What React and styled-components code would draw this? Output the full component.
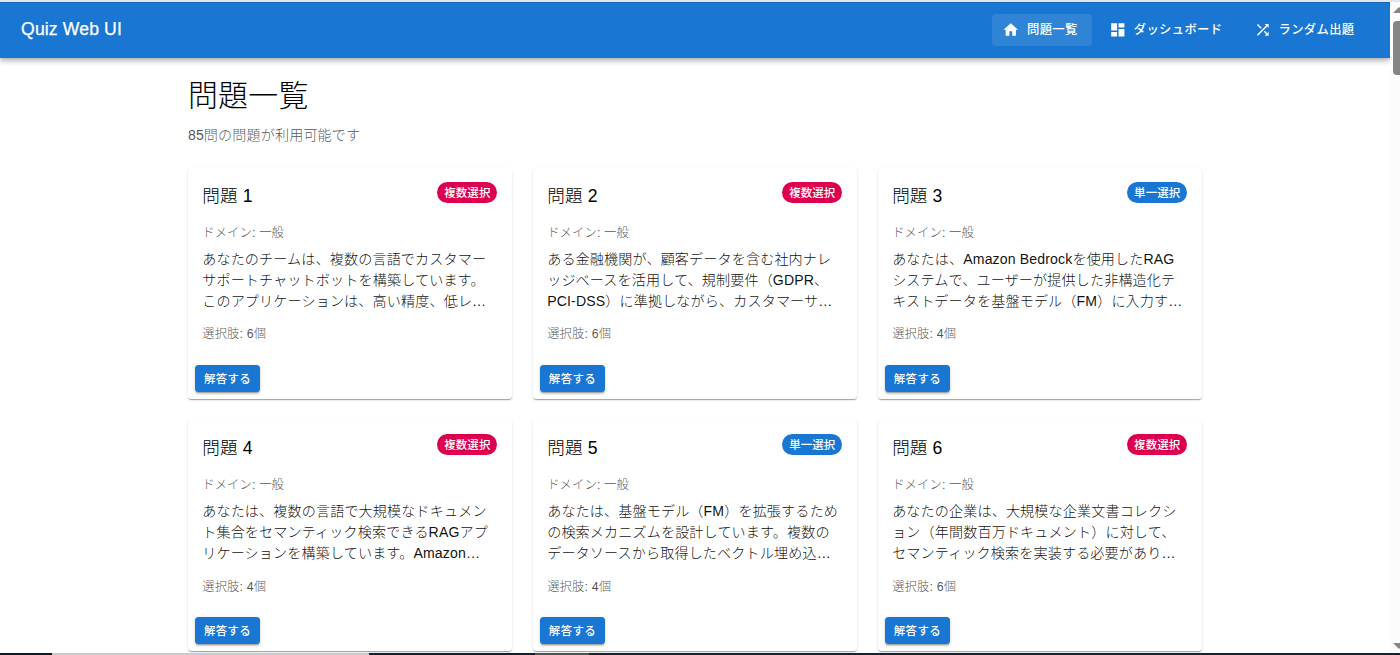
import React from "react";
import styled, { createGlobalStyle } from "styled-components";

const Global = createGlobalStyle`
  * { box-sizing: border-box; }
  html, body { margin: 0; height: 100%; overflow: hidden; background: #fff; }
  body {
    font-family: "Liberation Sans", "Noto Sans CJK JP", sans-serif;
    font-size: 14.08px;
    color: rgba(0, 0, 0, 0.87);
  }
`;

const Window = styled.div`
  height: 655px;
  display: flex;
  flex-direction: column;
  overflow: hidden;
`;

const TopEdge = styled.div`
  height: 2px;
  flex: none;
  background: #dfe7f1;
`;

const Viewport = styled.div`
  flex: 1;
  min-height: 0;
  display: flex;
`;

const Page = styled.div`
  flex: 1;
  min-width: 0;
  overflow: hidden;
`;

const AppBar = styled.header`
  height: 56px;
  padding: 0 21.1px 2px;
  display: flex;
  align-items: center;
  justify-content: space-between;
  background: #1976d2;
  color: #fff;
  border-top: 1px solid #1564b5;
  box-shadow: 0 1.8px 3.5px -1px rgba(0, 0, 0, 0.2),
    0 3.5px 4.4px rgba(0, 0, 0, 0.14), 0 1px 8.8px rgba(0, 0, 0, 0.12);
`;

const Brand = styled.div`
  font-size: 17.6px;
  line-height: 28px;
  padding-bottom: 1px;
  letter-spacing: 0.13px;
  -webkit-text-stroke: 0.25px currentColor;
`;

const Nav = styled.nav`
  display: flex;
  gap: 7px;
`;

const NavButton = styled.button`
  height: 32px;
  padding: 0 14px 0 10.5px;
  border: 0;
  border-radius: 3.5px;
  display: flex;
  align-items: center;
  gap: 7px;
  color: #fff;
  background: ${(p) => (p.$active ? "rgba(255, 255, 255, 0.1)" : "transparent")};
  font: 500 12.32px "Liberation Sans", "Noto Sans CJK JP", sans-serif;
  letter-spacing: 0.352px;
  white-space: nowrap;

  svg {
    width: 17.6px;
    height: 17.6px;
    fill: currentColor;
  }
`;

const NavLabel = styled.span`
  padding-bottom: 1px;
`;

const Container = styled.main`
  width: 1013.8px;
  margin: 0 auto;
  padding-top: 18.5px;
`;

const Heading = styled.h1`
  margin: 0 0 11.4px;
  font-size: 29.92px;
  font-weight: 300;
  line-height: 37px;
  letter-spacing: 0.3px;
  color: #000;
`;

const Subtitle = styled.p`
  margin: 0 0 21.6px;
  font-weight: 300;
  line-height: 21.12px;
  letter-spacing: 0.142px;
  color: rgba(0, 0, 0, 0.7);
`;

const Grid = styled.div`
  display: grid;
  grid-template-columns: repeat(3, 1fr);
  gap: 21.1px;
`;

const Card = styled.article`
  height: 231px;
  display: flex;
  flex-direction: column;
  border-radius: 3.5px;
  background: #fff;
  box-shadow: 0 1.8px 1px -1px rgba(0, 0, 0, 0.2),
    0 1px 1px rgba(0, 0, 0, 0.14), 0 1px 2.6px rgba(0, 0, 0, 0.12);
`;

const CardContent = styled.div`
  flex: 1;
  padding: 14.08px 14.3px;
`;

const CardHeader = styled.div`
  display: flex;
  justify-content: space-between;
  align-items: flex-start;
  margin-bottom: 14.9px;
`;

const CardTitle = styled.h2`
  margin: 0;
  font-size: 17.6px;
  font-weight: 300;
  line-height: 28.16px;
  letter-spacing: 0.132px;
  color: #000;
`;

const Chip = styled.span`
  height: 21.1px;
  padding: 0 7px 1px;
  border-radius: 11px;
  display: flex;
  align-items: center;
  color: #fff;
  background: ${(p) => (p.$multiple ? "#dc004e" : "#1976d2")};
  font-size: 11.44px;
  font-weight: 500;
  letter-spacing: 0.13px;
`;

const Meta = styled.p`
  margin: 0;
  font-size: 12.32px;
  font-weight: 300;
  line-height: 17.6px;
  letter-spacing: 0.142px;
  color: rgba(0, 0, 0, 0.7);
`;

const Question = styled.p`
  margin: 6.2px 0 14.6px;
  font-weight: 300;
  line-height: 21.12px;
  letter-spacing: 0.142px;
  color: rgba(0, 0, 0, 0.95);
`;

const Line = styled.span`
  display: block;
  white-space: nowrap;
`;

const CardActions = styled.div`
  padding: 7px 7.5px;
`;

const AnswerButton = styled.button`
  height: 27px;
  padding: 0 8.5px 2px;
  border: 0;
  border-radius: 3.5px;
  display: block;
  color: #fff;
  background: #1976d2;
  font: 500 11.44px "Liberation Sans", "Noto Sans CJK JP", sans-serif;
  letter-spacing: 0.352px;
  box-shadow: 0 2.6px 1px -1.8px rgba(0, 0, 0, 0.2),
    0 1.8px 1.8px rgba(0, 0, 0, 0.14), 0 1px 4.4px rgba(0, 0, 0, 0.12);
`;

const ScrollTrack = styled.div`
  width: 10.4px;
  flex: none;
  overflow: hidden;
  padding: 5px 0 4px 3px;
  display: flex;
  flex-direction: column;
  background: #fcfcfd;
`;

const ScrollThumb = styled.div`
  width: 12px;
  height: 54px;
  margin: 8px 0 auto;
  border-radius: 4px;
  background: #858585;
`;

const Arrow = styled.svg`
  width: 12px;
  height: 6px;
  flex: none;
  fill: #858585;
`;

const BottomEdge = styled.div`
  height: 2px;
  flex: none;
  display: flex;
  background: #14232f;
`;

const Segment = styled.div`
  width: ${(p) => p.$width}px;
  background: ${(p) => p.$color};
`;

const icons = {
  home: "M10 20v-6h4v6h5v-8h3L12 3 2 12h3v8z",
  dashboard: "M3 13h8V3H3zm0 8h8v-6H3zm10 0h8V11h-8zm0-18v6h8V3z",
  shuffle:
    "M10.59 9.17 5.41 4 4 5.41l5.17 5.17zM14.5 4l2.04 2.04L4 18.59 5.41 20 17.96 7.46 20 9.5V4zm.33 9.41-1.41 1.41 3.13 3.13L14.5 20H20v-5.5l-2.04 2.04z",
};

const navItems = [
  { label: "問題一覧", icon: "home", active: true },
  { label: "ダッシュボード", icon: "dashboard" },
  { label: "ランダム出題", icon: "shuffle" },
];

const questions = [
  {
    multiple: true,
    choices: 6,
    lines: [
      "あなたのチームは、複数の言語でカスタマー",
      "サポートチャットボットを構築しています。",
      "このアプリケーションは、高い精度、低レ…",
    ],
  },
  {
    multiple: true,
    choices: 6,
    lines: [
      "ある金融機関が、顧客データを含む社内ナレ",
      "ッジベースを活用して、規制要件（GDPR、",
      "PCI-DSS）に準拠しながら、カスタマーサ…",
    ],
  },
  {
    multiple: false,
    choices: 4,
    lines: [
      "あなたは、Amazon Bedrockを使用したRAG",
      "システムで、ユーザーが提供した非構造化テ",
      "キストデータを基盤モデル（FM）に入力す…",
    ],
  },
  {
    multiple: true,
    choices: 4,
    lines: [
      "あなたは、複数の言語で大規模なドキュメン",
      "ト集合をセマンティック検索できるRAGアプ",
      "リケーションを構築しています。Amazon…",
    ],
  },
  {
    multiple: false,
    choices: 4,
    lines: [
      "あなたは、基盤モデル（FM）を拡張するため",
      "の検索メカニズムを設計しています。複数の",
      "データソースから取得したベクトル埋め込…",
    ],
  },
  {
    multiple: true,
    choices: 6,
    lines: [
      "あなたの企業は、大規模な企業文書コレクシ",
      "ョン（年間数百万ドキュメント）に対して、",
      "セマンティック検索を実装する必要があり…",
    ],
  },
];

function QuestionCard({ number, multiple, choices, lines }) {
  return (
    <Card>
      <CardContent>
        <CardHeader>
          <CardTitle>問題 {number}</CardTitle>
          <Chip $multiple={multiple}>{multiple ? "複数選択" : "単一選択"}</Chip>
        </CardHeader>
        <Meta>ドメイン: 一般</Meta>
        <Question>
          {lines.map((line) => (
            <Line key={line}>{line}</Line>
          ))}
        </Question>
        <Meta>選択肢: {choices}個</Meta>
      </CardContent>
      <CardActions>
        <AnswerButton>解答する</AnswerButton>
      </CardActions>
    </Card>
  );
}

export default function App() {
  return (
    <Window lang="ja">
      <Global />
      <TopEdge />
      <Viewport>
        <Page>
          <AppBar>
            <Brand>Quiz Web UI</Brand>
            <Nav>
              {navItems.map((item) => (
                <NavButton key={item.label} $active={item.active}>
                  <svg viewBox="0 0 24 24">
                    <path d={icons[item.icon]} />
                  </svg>
                  <NavLabel>{item.label}</NavLabel>
                </NavButton>
              ))}
            </Nav>
          </AppBar>
          <Container>
            <Heading>問題一覧</Heading>
            <Subtitle>85問の問題が利用可能です</Subtitle>
            <Grid>
              {questions.map((q, i) => (
                <QuestionCard key={i} number={i + 1} {...q} />
              ))}
            </Grid>
          </Container>
        </Page>
        <ScrollTrack>
          <Arrow viewBox="0 0 12 6">
            <path d="M6 0 L12 6 H0 Z" />
          </Arrow>
          <ScrollThumb />
          <Arrow viewBox="0 0 12 6">
            <path d="M0 0 H12 L6 6 Z" />
          </Arrow>
        </ScrollTrack>
      </Viewport>
      <BottomEdge>
        <Segment $width={52} $color="#0b1a26" />
        <Segment $width={317} $color="#c9cccf" />
        <Segment $width={166} $color="#10222e" />
        <Segment $width={54} $color="#4a5652" />
      </BottomEdge>
    </Window>
  );
}
